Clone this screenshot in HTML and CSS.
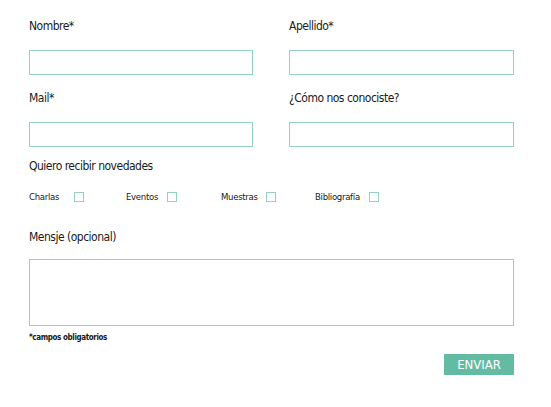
FILE: index.html
```html
<!DOCTYPE html>
<html lang="es">
<head>
<meta charset="utf-8">
<link rel="stylesheet" href="styles.css">
</head>
<body>
<form class="form">
  <div class="grid">
    <div class="field">
      <label class="label">Nombre*</label>
      <input class="input" type="text">
    </div>
    <div class="field">
      <label class="label">Apellido*</label>
      <input class="input" type="text">
    </div>
    <div class="field">
      <label class="label">Mail*</label>
      <input class="input" type="text">
    </div>
    <div class="field">
      <label class="label">¿Cómo nos conociste?</label>
      <input class="input" type="text">
    </div>
  </div>
  <div class="news">
    <div class="label">Quiero recibir novedades</div>
    <div class="checks">
      <label class="check"><span class="ctext t1">Charlas</span><span class="box"></span></label>
      <label class="check"><span class="ctext t2">Eventos</span><span class="box"></span></label>
      <label class="check"><span class="ctext t3">Muestras</span><span class="box"></span></label>
      <label class="check"><span class="ctext t4">Bibliografía</span><span class="box"></span></label>
    </div>
  </div>
  <div class="message">
    <label class="label">Mensje (opcional)</label>
    <div class="textarea-wrap"><textarea class="textarea"></textarea></div>
  </div>
  <p class="note">*campos obligatorios</p>
  <div class="actions">
    <button class="btn" type="button">ENVIAR</button>
  </div>
</form>
</body>
</html>
```
FILE: styles.css
```css
html, body {
  margin: 0;
  background: #fff;
}
body {
  font-family: "DejaVu Sans Condensed", "Liberation Sans Narrow", "Liberation Sans", sans-serif;
  font-stretch: condensed;
  color: #1a1a1a;
}
.form {
  width: 485px;
  padding: 18px 0 0 29px;
}
.grid {
  display: grid;
  grid-template-columns: 224px 225px;
  column-gap: 36px;
  row-gap: 15px;
}
.field {
  display: flex;
  flex-direction: column;
}
.label {
  display: block;
  font-size: 12px;
  line-height: 16px;
  letter-spacing: -0.5px;
}
.input {
  margin-top: 16px;
  height: 25px;
  box-sizing: border-box;
  border: 1px solid #94d2bf;
  outline: none;
  padding: 0 6px;
}
.news {
  margin-top: 11px;
}
.checks {
  display: flex;
  align-items: center;
  margin-top: 17px;
  font-size: 9.5px;
  line-height: 12px;
}
.check {
  display: flex;
  align-items: center;
}
.ctext {
  display: inline-block;
  letter-spacing: -0.3px;
}
.t1 { width: 45px; }
.t2 { width: 41px; }
.t3 { width: 45px; }
.t4 { width: 54px; }
.box {
  display: block;
  width: 8px;
  height: 8px;
  border: 1px solid #94d2bf;
}
.check + .check { margin-left: 42px; }
.check:nth-child(3) { margin-left: 44px; }
.check:nth-child(4) { margin-left: 39px; }
.message {
  margin-top: 26px;
}
.textarea-wrap {
  margin-top: 14px;
  height: 65px;
  border: 1px solid #94d2bf;
}
.textarea {
  display: block;
  width: 100%;
  height: 100%;
  box-sizing: border-box;
  border: 0;
  padding: 4px 6px;
  resize: none;
  outline: none;
  background: transparent;
}
.note {
  margin: 6px 0 0;
  font-size: 8px;
  line-height: 12px;
  font-weight: bold;
  letter-spacing: -0.4px;
}
.actions {
  display: flex;
  justify-content: flex-end;
  margin-top: 10px;
}
.btn {
  width: 70px;
  height: 21px;
  background: #64bba3;
  color: #fff;
  border: 0;
  font-family: inherit;
  font-size: 13px;
  padding: 0;
  cursor: pointer;
}
```
